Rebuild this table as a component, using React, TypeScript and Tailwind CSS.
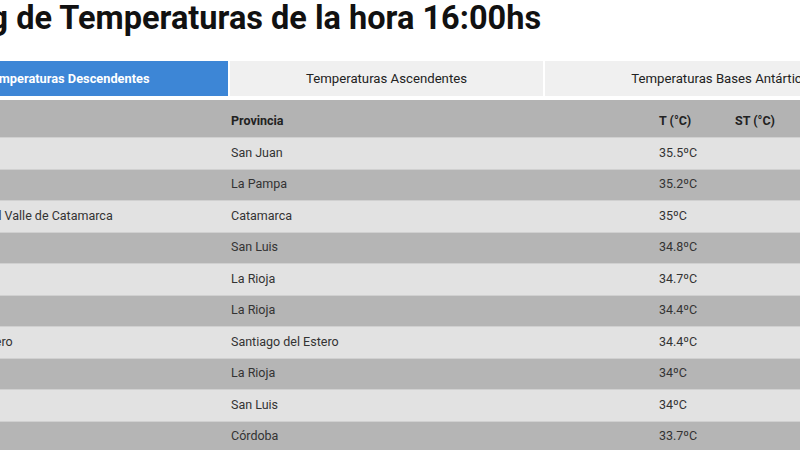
import React from "react";

const rows: [string, string, string][] = [
  ["Jáchal", "San Juan", "35.5ºC"],
  ["Santa Rosa", "La Pampa", "35.2ºC"],
  ["San Fernando del Valle de Catamarca", "Catamarca", "35ºC"],
  ["San Luis", "San Luis", "34.8ºC"],
  ["Chamical", "La Rioja", "34.7ºC"],
  ["Chepes", "La Rioja", "34.4ºC"],
  ["Santiago del Estero", "Santiago del Estero", "34.4ºC"],
  ["La Rioja", "La Rioja", "34ºC"],
  ["Villa Reynolds", "San Luis", "34ºC"],
  ["Villa Dolores", "Córdoba", "33.7ºC"],
];

export default function App() {
  return (
    <div
      className="w-[800px] h-[450px] overflow-hidden bg-white"
      style={{ fontFamily: "Roboto, 'Liberation Sans', sans-serif" }}
    >
      <div className="ml-[-88px] w-[990px]">
        <h1 className="ml-[-23px] text-[32.5px] leading-[36px] font-bold text-[#111] whitespace-nowrap">
          Ranking de Temperaturas de la hora 16:00hs
        </h1>
        <div className="mt-[25px] flex h-[35px] text-[13.2px]">
          <div className="w-[316px] bg-[#3d86d6] text-white text-[12.8px] font-bold flex items-center justify-center pr-[6px]">
            Temperaturas Descendentes
          </div>
          <div className="ml-[2px] w-[313px] bg-[#f0f0f0] text-[#222] flex items-center justify-center">
            Temperaturas Ascendentes
          </div>
          <div className="ml-[2px] flex-1 bg-[#f0f0f0] text-[#222] flex items-center justify-center">
            Temperaturas Bases Antárticas
          </div>
        </div>
        <div className="mt-[4px] text-[12.5px] text-[#333]">
          <div className="flex h-[37px] items-center pt-[5px] bg-[#b3b3b3] font-bold text-[#222]">
            <div className="w-[319px]" />
            <div className="w-[428px]">Provincia</div>
            <div className="w-[76px]">T (°C)</div>
            <div>ST (°C)</div>
          </div>
          {rows.map(([name, prov, t], i) => (
            <div
              key={i}
              className={`flex h-[31.5px] items-center border-t border-[#d0d0d0] ${
                i % 2 === 0 ? "bg-[#e2e2e2]" : "bg-[#b5b5b5]"
              }`}
            >
              <div className="w-[319px] ml-[-7px] whitespace-nowrap">{name}</div>
              <div className="w-[428px] ml-[7px]">{prov}</div>
              <div className="w-[76px]">{t}</div>
              <div></div>
            </div>
          ))}
        </div>
      </div>
    </div>
  );
}
